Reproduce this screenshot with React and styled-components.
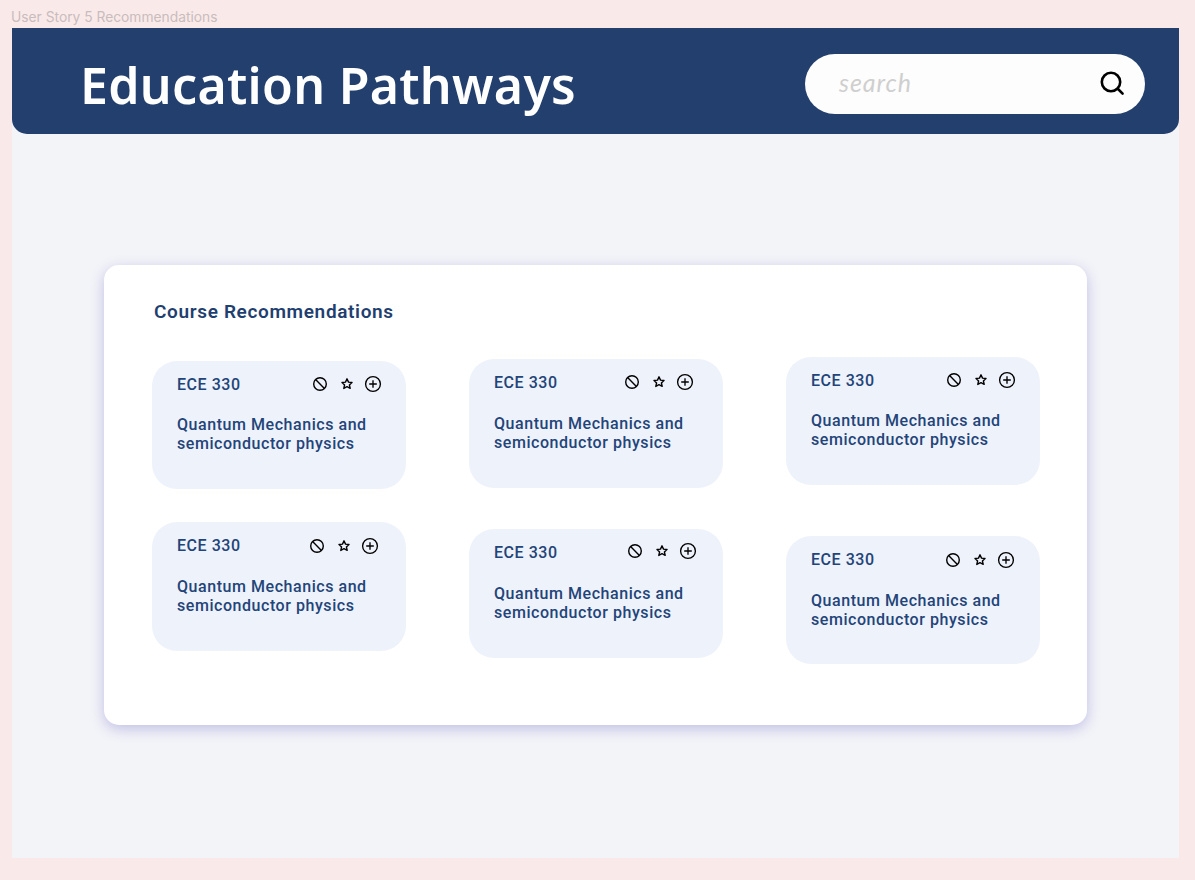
import React from 'react'
import styled, { createGlobalStyle } from 'styled-components'

const GlobalStyle = createGlobalStyle`
  html, body {
    margin: 0;
    padding: 0;
    background: #f9eae9;
  }
`

function BlockIcon() {
  return (
    <svg width="16" height="16" viewBox="0 0 16 16" fill="none" stroke="#000" strokeWidth="1.4">
      <circle cx="8" cy="8" r="6.3" />
      <path d="M3.6 3.6 12.4 12.4" />
    </svg>
  )
}

function StarIcon() {
  return (
    <svg width="14" height="14" viewBox="0 0 14 14" fill="none" stroke="#000" strokeWidth="1.4" strokeLinejoin="round">
      <path d="M7 1.8 8.5 5.1 12 5.5 9.4 7.9 10.2 11.4 7 9.7 3.8 11.4 4.6 7.9 2 5.5 5.5 5.1Z" />
    </svg>
  )
}

function PlusIcon() {
  return (
    <svg width="18" height="18" viewBox="0 0 18 18" fill="none" stroke="#000" strokeWidth="1.35">
      <circle cx="9" cy="9" r="7.4" />
      <path d="M9 5.2V12.8M5.2 9H12.8" />
    </svg>
  )
}

function CourseCard({ iconRight, iconDrop, nameGap, height }) {
  return (
    <Tile $height={height}>
      <TileTop>
        <Code>ECE 330</Code>
        <Actions $right={iconRight} $drop={iconDrop}>
          <BlockIcon />
          <StarIcon />
          <PlusIcon />
        </Actions>
      </TileTop>
      <Name $gap={nameGap}>
        Quantum Mechanics and
        <br />
        semiconductor physics
      </Name>
    </Tile>
  )
}

const columns = [
  {
    top: 96,
    gap: 33,
    cards: [
      { iconRight: 24, iconDrop: 0, nameGap: 22, height: 128 },
      { iconRight: 27, iconDrop: 1, nameGap: 23, height: 129 },
    ],
  },
  {
    top: 94,
    gap: 41,
    cards: [
      { iconRight: 29, iconDrop: 0, nameGap: 23, height: 129 },
      { iconRight: 26, iconDrop: -1, nameGap: 23, height: 129 },
    ],
  },
  {
    top: 92,
    gap: 51,
    cards: [
      { iconRight: 24, iconDrop: 0, nameGap: 22, height: 128 },
      { iconRight: 25, iconDrop: 1, nameGap: 23, height: 128 },
    ],
  },
]

function App() {
  return (
    <>
      <GlobalStyle />
      <Page>
        <FrameLabel>User Story 5 Recommendations</FrameLabel>
        <Frame>
          <Header>
            <Logo>Education Pathways</Logo>
            <SearchBox>
              <SearchText>search</SearchText>
              <svg width="26" height="26" viewBox="0 0 26 26" fill="none" stroke="#000" strokeWidth="2.6" strokeLinecap="round">
                <circle cx="12" cy="12" r="9.2" />
                <path d="M19 19 23.6 23.6" />
              </svg>
            </SearchBox>
          </Header>
          <Body>
            <Panel>
              <PanelTitle>Course Recommendations</PanelTitle>
              <Columns>
                {columns.map((col, i) => (
                  <Column key={i} $top={col.top} $gap={col.gap}>
                    {col.cards.map((card, j) => (
                      <CourseCard key={j} {...card} />
                    ))}
                  </Column>
                ))}
              </Columns>
            </Panel>
          </Body>
        </Frame>
      </Page>
    </>
  )
}

const Page = styled.div`
  width: 1195px;
  height: 880px;
  padding: 0 16px 22px 12px;
  box-sizing: border-box;
  display: flex;
  flex-direction: column;
  overflow: hidden;
  background: #f9eae9;
`

const FrameLabel = styled.div`
  height: 28px;
  line-height: 35px;
  margin-left: -1px;
  font-family: Inter, "Liberation Sans", sans-serif;
  font-size: 13.8px;
  color: #c9bcbd;
`

const Frame = styled.div`
  flex: 1;
  display: flex;
  flex-direction: column;
  background: #f3f4f8;
`

const Header = styled.header`
  height: 106px;
  flex-shrink: 0;
  box-sizing: border-box;
  padding: 26px 34px 20px 68px;
  display: flex;
  align-items: flex-start;
  justify-content: space-between;
  background: #233f6e;
  border-radius: 0 0 15px 15px;
`

const Logo = styled.h1`
  margin: 0;
  font-family: "Noto Sans", sans-serif;
  font-size: 50px;
  line-height: 62px;
  font-weight: 600;
  letter-spacing: 0.3px;
  color: #fff;
`

const SearchBox = styled.div`
  width: 340px;
  height: 60px;
  box-sizing: border-box;
  padding: 0 20px 2px 34px;
  display: flex;
  align-items: center;
  justify-content: space-between;
  background: #fdfdfd;
  border-radius: 30px;
`

const SearchText = styled.span`
  font-family: Lato, sans-serif;
  font-style: italic;
  font-weight: 400;
  font-size: 25px;
  letter-spacing: 0.9px;
  color: #cfcfcf;
  margin-top: -3px;
`

const Body = styled.main`
  flex: 1;
  padding: 131px 92px 133px;
`

const Panel = styled.section`
  height: 460px;
  box-sizing: border-box;
  padding: 34px 47px 0 48px;
  background: #fff;
  border-radius: 15px;
  box-shadow: 0 4px 14px rgba(90, 85, 190, 0.33);
`

const PanelTitle = styled.h2`
  margin: 0 0 0 2px;
  font-family: Roboto, sans-serif;
  font-size: 19px;
  line-height: 26px;
  font-weight: 600;
  letter-spacing: 0.65px;
  color: #1f3f70;
`

const Columns = styled.div`
  display: flex;
  justify-content: space-between;
  margin-top: -60px;
`

const Column = styled.div`
  display: flex;
  flex-direction: column;
  padding-top: ${(p) => p.$top}px;
  gap: ${(p) => p.$gap}px;
`

const Tile = styled.article`
  width: 254px;
  height: ${(p) => p.$height}px;
  box-sizing: border-box;
  padding: 14px 0 0 25px;
  background: #eef2fb;
  border-radius: 25px;
`

const TileTop = styled.div`
  display: flex;
  align-items: center;
  justify-content: space-between;
  height: 18px;
`

const Code = styled.span`
  font-family: Roboto, sans-serif;
  font-size: 16px;
  font-weight: 500;
  letter-spacing: 0.55px;
  color: #234478;
`

const Actions = styled.div`
  display: flex;
  align-items: center;
  gap: 10px;
  margin-right: ${(p) => p.$right}px;
  transform: translateY(${(p) => p.$drop}px);

  & > svg:first-child {
    margin-right: 2px;
  }
`

const Name = styled.p`
  margin: ${(p) => p.$gap}px 0 0;
  font-family: Roboto, sans-serif;
  font-size: 16px;
  line-height: 19px;
  font-weight: 500;
  letter-spacing: 0.55px;
  color: #234478;
`

export default App
